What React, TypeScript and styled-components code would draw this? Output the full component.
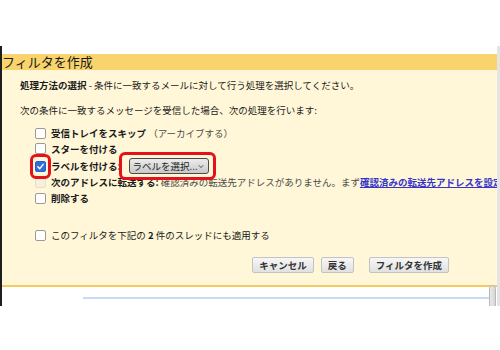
import React from "react";
import styled, { createGlobalStyle } from "styled-components";

const GlobalStyle = createGlobalStyle`
  html, body {
    margin: 0;
    padding: 0;
    background: #ffffff;
  }
  body {
    font-family: "Noto Sans CJK JP", "Noto Sans", sans-serif;
    color: #1a1a1a;
  }
`;

const Frame = styled.div`
  position: relative;
  margin-top: 46px;
  width: 500px;
  height: 260px;
  box-sizing: border-box;
  border-left: 2px solid #1e1e1e;
  border-right: 3px solid #e4e4e4;
  overflow: hidden;
  padding-top: 8px;
`;

const Header = styled.div`
  height: 16px;
  background: #f9d46c;
  font-size: 13px;
  line-height: 16px;
  color: #1a1a1a;
  white-space: nowrap;
`;

const Body = styled.div`
  background: #fff7d8;
  border-bottom: 2px solid #f6ca5e;
  padding: 8px 0 12px 18px;
  font-size: 9.5px;
  white-space: nowrap;
`;

const Line = styled.div<{ $top?: number }>`
  line-height: 14px;
  margin-top: ${(p) => p.$top ?? 0}px;
`;

const Strong = styled.span`
  font-weight: 700;
`;

const Muted = styled.span`
  color: #4a4a4a;
`;

const Link = styled.span`
  color: #3535c8;
  text-decoration: underline;
  font-weight: 700;
`;

const Options = styled.div`
  margin-top: 8px;
  padding-left: 15px;
`;

const Row = styled.div<{ $h?: number; $top?: number }>`
  display: flex;
  align-items: center;
  gap: 5px;
  height: ${(p) => p.$h ?? 16}px;
  margin-top: ${(p) => p.$top ?? 0}px;
`;

const Box = styled.span<{ $checked?: boolean; $disabled?: boolean }>`
  display: inline-flex;
  align-items: center;
  justify-content: center;
  box-sizing: border-box;
  width: 11px;
  height: 11px;
  border-radius: 2px;
  flex: none;
  border: 1px solid
    ${(p) => (p.$checked ? "#2a62c9" : p.$disabled ? "#e4dfcc" : "#9a9a9a")};
  background: ${(p) =>
    p.$checked ? "#2f6fd8" : p.$disabled ? "#f6f1de" : "#ffffff"};
`;

const Highlight = styled.span<{ $x: number; $y: number }>`
  position: relative;
  display: inline-flex;
  &::after {
    content: "";
    position: absolute;
    inset: ${(p) => `-${p.$y}px -${p.$x}px`};
    border: 3px solid #e3121b;
    border-radius: 6px;
    pointer-events: none;
  }
`;

const Select = styled.span`
  display: inline-flex;
  align-items: center;
  justify-content: space-between;
  box-sizing: border-box;
  width: 80px;
  height: 16px;
  padding: 0 4px 0 3px;
  border: 1px solid #4a4a4a;
  border-radius: 3px;
  background: linear-gradient(#ececec, #c9c9c9);
  font-size: 9.5px;
  color: #222;
  margin-left: 3px;
`;

const Buttons = styled.div`
  display: flex;
  justify-content: flex-end;
  padding-right: 48px;
  margin-top: 14px;
`;

const Button = styled.span<{ $gap?: number }>`
  display: inline-flex;
  align-items: center;
  height: 16px;
  box-sizing: border-box;
  padding: 0 6px;
  margin-left: ${(p) => p.$gap ?? 0}px;
  border: 1px solid #c3c3c3;
  border-radius: 2px;
  background: linear-gradient(#f7f7f7, #e1e1e1);
  font-size: 9.5px;
  font-weight: 700;
  color: #333;
`;

const Under = styled.div`
  height: 12px;
  display: flex;
  align-items: flex-end;
  padding-left: 81px;
  padding-right: 8px;
`;

const BlueLine = styled.div`
  flex: 1;
  height: 2px;
  background: #c8daf6;
`;

const Scroll = styled.div`
  position: absolute;
  right: 1px;
  top: 239px;
  width: 7px;
  height: 30px;
  box-sizing: border-box;
  border: 1px solid #b9b9b9;
  border-radius: 4px;
  background: linear-gradient(90deg, #e9e9e9, #d6d6d6);
`;

const Check = () => (
  <svg width="9" height="9" viewBox="0 0 10 10">
    <path
      d="M2 5.3 L4.2 7.4 L8 2.6"
      fill="none"
      stroke="#fff"
      strokeWidth="1.6"
      strokeLinecap="round"
      strokeLinejoin="round"
    />
  </svg>
);

const Chevron = () => (
  <svg width="7" height="5" viewBox="0 0 7 5">
    <path d="M1 1 L3.5 3.8 L6 1" fill="none" stroke="#444" strokeWidth="1" />
  </svg>
);

export default function App() {
  return (
    <>
      <GlobalStyle />
      <Frame>
        <Header>フィルタを作成</Header>
        <Body>
          <Line>
            <Strong>処理方法の選択</Strong> - 条件に一致するメールに対して行う処理を選択してください。
          </Line>
          <Line $top={11}>次の条件に一致するメッセージを受信した場合、次の処理を行います:</Line>
          <Options>
            <Row>
              <Box />
              <span>
                <Strong>受信トレイをスキップ</Strong> <Muted>（アーカイブする）</Muted>
              </span>
            </Row>
            <Row $h={15}>
              <Box />
              <Strong>スターを付ける</Strong>
            </Row>
            <Row $h={20}>
              <Highlight $x={5} $y={7}>
                <Box $checked>
                  <Check />
                </Box>
              </Highlight>
              <Strong>ラベルを付ける:</Strong>
              <Highlight $x={7} $y={6}>
                <Select>
                  ラベルを選択...
                  <Chevron />
                </Select>
              </Highlight>
            </Row>
            <Row $top={-2}>
              <Box $disabled />
              <span>
                <Strong>次のアドレスに転送する:</Strong>{" "}
                <Muted>確認済みの転送先アドレスがありません。まず</Muted>
                <Link>確認済みの転送先アドレスを設定</Link>
              </span>
            </Row>
            <Row>
              <Box />
              <Strong>削除する</Strong>
            </Row>
            <Row $top={21}>
              <Box />
              <span>
                このフィルタを下記の <Strong>2</Strong> 件のスレッドにも適用する
              </span>
            </Row>
          </Options>
          <Buttons>
            <Button>キャンセル</Button>
            <Button $gap={7}>戻る</Button>
            <Button $gap={15}>フィルタを作成</Button>
          </Buttons>
        </Body>
        <Under>
          <BlueLine />
        </Under>
        <Scroll />
      </Frame>
    </>
  );
}
